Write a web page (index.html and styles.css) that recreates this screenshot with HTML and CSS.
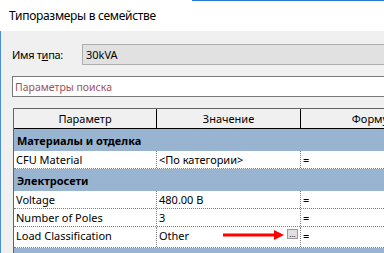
FILE: index.html
```html
<!DOCTYPE html>
<html lang="ru">
<head>
    <meta charset="UTF-8">
    <title>Типоразмеры в семействе</title>
    <link rel="stylesheet" href="styles.css">
</head>
<body>
    <div class="titlebar">Типоразмеры в семействе</div>
    <div class="dialog">
        <div class="type-row">
            <label class="type-label">Имя т<u>и</u>па:</label>
            <div class="combo">30kVA</div>
        </div>
        <div class="search">Параметры поиска</div>
        <div class="grid">
            <div class="row head">
                <div class="cell">Параметр</div>
                <div class="cell">Значение</div>
                <div class="cell">Формула</div>
                <div class="cell">Блокировка</div>
            </div>
            <div class="group">Материалы и отделка</div>
            <div class="row">
                <div class="cell">CFU Material</div>
                <div class="cell">&lt;По категории&gt;</div>
                <div class="cell">=</div>
                <div class="cell"></div>
            </div>
            <div class="group">Электросети</div>
            <div class="row">
                <div class="cell">Voltage</div>
                <div class="cell">480.00 В</div>
                <div class="cell">=</div>
                <div class="cell"></div>
            </div>
            <div class="row">
                <div class="cell">Number of Poles</div>
                <div class="cell">3</div>
                <div class="cell">=</div>
                <div class="cell"></div>
            </div>
            <div class="row tall">
                <div class="cell">Load Classification</div>
                <div class="cell value-edit">
                    <span>Other</span>
                    <svg class="arrow" width="62" height="10" viewBox="0 0 62 10">
                        <rect x="0" y="3.5" width="53" height="3" fill="#f00"/>
                        <polygon points="51,0 61,5 51,10" fill="#f00"/>
                    </svg>
                    <button class="dots">...</button>
                </div>
                <div class="cell">=</div>
                <div class="cell"></div>
            </div>
            <div class="group">Электросети - Нагрузки</div>
        </div>
    </div>
</body>
</html>
```

FILE: styles.css
```css
body {
    margin: 0;
    width: 384px;
    height: 253px;
    overflow: hidden;
    font-family: "Noto Sans", "Liberation Sans", sans-serif;
    color: #000;
}
.titlebar {
    height: 31px;
    display: flex;
    align-items: center;
    padding-left: 9px;
    font-size: 12px;
    letter-spacing: -0.3px;
    background: linear-gradient(to right, #fff 0 50%, #2b79d0 50%) top / 100% 1px no-repeat, #fff;
}
.dialog {
    height: 222px;
    padding-top: 13px;
    box-sizing: border-box;
    background: #f0f0f0;
    border-left: 1px solid #4a8fd6;
    overflow: hidden;
    font-size: 11px;
}
.type-row {
    display: flex;
    align-items: center;
    padding-left: 11px;
}
.type-label {
    flex: none;
    width: 70px;
    white-space: nowrap;
    font-size: 11px;
    letter-spacing: -0.3px;
}
.combo {
    width: 320px;
    flex: none;
    height: 21px;
    box-sizing: border-box;
    border: 1px solid #adadad;
    background: #e1e1e1;
    padding-left: 3px;
    display: flex;
    align-items: center;
    font-size: 11px;
}
.search {
    margin: 11px 0 0 11px;
    width: 400px;
    height: 21px;
    box-sizing: border-box;
    border: 1px solid #7a7a7a;
    background: #fff;
    padding-left: 2px;
    display: flex;
    align-items: center;
    font-size: 10.5px;
    color: #a0505c;
}
.grid {
    margin: 11px 0 0 12px;
    width: 560px;
    border-left: 1px solid #646464;
    border-top: 1px solid #646464;
    background: #fff;
}
.row {
    display: grid;
    grid-template-columns: 143px 144px 151px 1fr;
    height: 18px;
    box-sizing: border-box;
    border-bottom: 1px dotted #808080;
}
.row .cell {
    border-right: 1px dotted #808080;
    padding-left: 2px;
    display: flex;
    align-items: center;
    white-space: nowrap;
    overflow: hidden;
}
.row.head {
    height: 20px;
    background: #f0f0f0;
    border-bottom: 1px solid #000;
}
.row.head .cell {
    justify-content: center;
    padding-left: 0;
    border-right: 1px solid #000;
}
.row.tall {
    height: 21px;
}
.row.tall .cell {
    align-items: flex-start;
    padding-top: 1px;
}
.group {
    height: 22px;
    background: #99b4d1;
    font-weight: bold;
    padding-left: 3px;
    display: flex;
    align-items: center;
}
.row .value-edit {
    position: relative;
    justify-content: space-between;
    padding-right: 2px;
}
.arrow {
    position: absolute;
    left: 66px;
    top: 3px;
}
.dots {
    width: 11px;
    height: 10px;
    padding: 0;
    border: 1px solid #9a9a9a;
    background: #e1e1e1;
    font-size: 8px;
    line-height: 6px;
    font-family: "Noto Sans", sans-serif;
    color: #000;
    margin-top: 1px;
}
```
